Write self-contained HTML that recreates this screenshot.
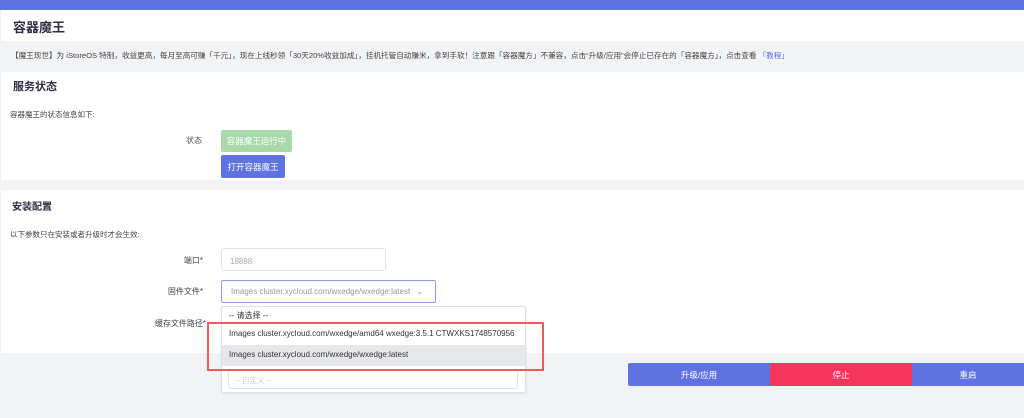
<!DOCTYPE html>
<html><head><meta charset="utf-8"><style>
*{margin:0;padding:0;box-sizing:border-box}
body{width:1024px;height:418px;overflow:hidden;background:#f2f3f5;font-family:"Liberation Sans","Noto Sans CJK SC",sans-serif;color:#333;position:relative}
.a{position:absolute;white-space:nowrap}
.card{position:absolute;background:#fff;left:1px;right:0}
.lbl{font-size:8px;color:#444;text-align:right;width:200px;left:3px}
.btn{position:absolute;color:#fff;font-size:8.5px;display:flex;align-items:center;justify-content:center;border-radius:2px}
</style></head><body>
<div class="a" style="left:0;top:0;width:1024px;height:10px;background:#5e73e1"></div>
<div class="card" style="top:10px;height:31px;border-radius:3px 0 0 3px"></div>
<div class="a" style="left:13px;top:17px;font-size:13px;font-weight:bold;color:#2d2d44">容器魔王</div>
<div class="a" style="left:11px;top:50px;font-size:7.6px;color:#444">【魔王现世】为 iStoreOS 特制，收益更高，每月至高可赚「千元」，现在上线秒领「30天20%收益加成」，挂机托管自动赚米，拿到手软！注意跟「容器魔方」不兼容，点击“升级/应用”会停止已存在的「容器魔方」，点击查看 <span style="color:#5b6fe0">「教程」</span></div>
<div class="card" style="top:72px;height:108px"></div>
<div class="a" style="left:13px;top:78px;font-size:11px;font-weight:bold;color:#2d2d44">服务状态</div>
<div class="a" style="left:10px;top:109px;font-size:7.5px;color:#444">容器魔王的状态信息如下:</div>
<div class="a" style="left:186px;top:135px;font-size:8px;color:#555">状态</div>
<div class="btn" style="left:221px;top:130px;width:71px;height:22px;background:#a9d9a8">容器魔王运行中</div>
<div class="btn" style="left:221px;top:155px;width:64px;height:23px;background:#5e73e1">打开容器魔王</div>
<div class="card" style="top:190px;height:163px"></div>
<div class="a" style="left:12px;top:198px;font-size:10px;font-weight:bold;color:#2d2d44">安装配置</div>
<div class="a" style="left:10px;top:229px;font-size:7.5px;color:#444">以下参数只在安装或者升级时才会生效:</div>
<div class="a lbl" style="top:255px">端口*</div>
<div class="a" style="left:221px;top:248px;width:165px;height:23px;border:1px solid #e3e5ea;border-radius:3px;font-size:8px;color:#aaa;padding:8px 8px">18888</div>
<div class="a lbl" style="top:286px">固件文件*</div>
<div class="a" style="left:221px;top:280px;width:215px;height:23px;border:1px solid #8c9df0;border-radius:2px;font-size:8px;color:#999;padding:6px 9px">Images cluster.xycloud.com/wxedge/wxedge:latest <span style="margin-left:4px">⌄</span></div>
<div class="a lbl" style="top:318px;width:203px">缓存文件路径*</div>
<div class="a" style="left:221px;top:306px;width:305px;height:87px;background:#fff;border:1px solid #dcdfe5;border-radius:3px;box-shadow:0 1px 3px rgba(0,0,0,.08)"></div>
<div class="a" style="left:229px;top:310px;font-size:8px;color:#333">-- 请选择 --</div>
<div class="a" style="left:222px;top:323px;width:303px;height:22px;background:#fff;font-size:8px;color:#333;padding:6px 7px">Images cluster.xycloud.com/wxedge/amd64 wxedge:3.5.1 CTWXKS1748570956</div>
<div class="a" style="left:222px;top:345px;width:303px;height:21px;background:#e5e7ea;font-size:8px;color:#333;padding:5px 7px">Images cluster.xycloud.com/wxedge/wxedge:latest</div>
<div class="a" style="left:228px;top:370px;width:290px;height:19px;border:1px solid #e3e5ea;border-radius:3px;font-size:7.5px;color:#ccc;padding:4px 6px">-- 自定义 --</div>
<div class="a" style="left:207px;top:322px;width:337px;height:49px;border:2px solid #f25a5a"></div>
<div class="btn" style="left:628px;top:363px;width:142px;height:23px;background:#5e73e1;border-radius:2px 0 0 2px">升级/应用</div>
<div class="btn" style="left:770px;top:363px;width:142px;height:23px;background:#f5365c;border-radius:0">停止</div>
<div class="btn" style="left:912px;top:363px;width:112px;height:23px;background:#5e73e1;border-radius:0">重启</div>
</body></html>
